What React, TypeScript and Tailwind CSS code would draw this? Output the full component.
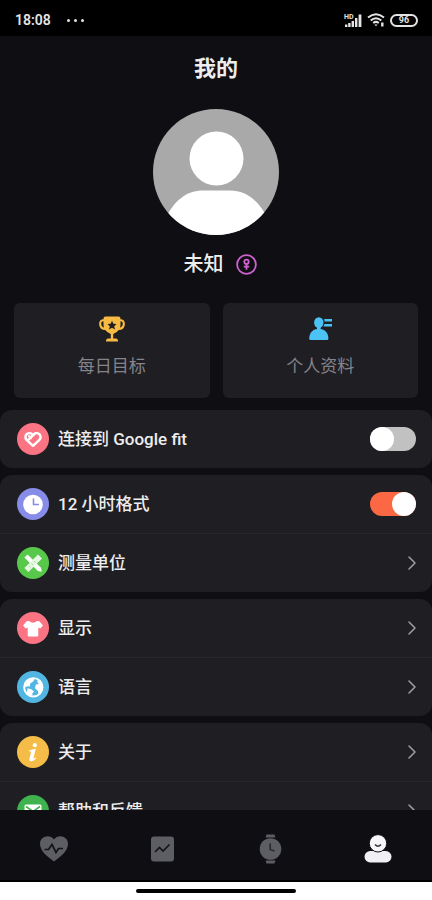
import React, { useState } from "react";
import { ChevronRight } from "lucide-react";

interface SettingItem {
  id: string;
  label: string;
  color: string;
  icon: React.ReactNode;
  toggle?: boolean;
  defaultOn?: boolean;
}

const HeartIcon = () => (
  <svg viewBox="0 0 32 32" className="w-8 h-8" fill="none" stroke="#fff" strokeWidth="2.5" strokeLinecap="round" strokeLinejoin="round">
    <path d="M16 22.8 L9.6 16.8 A3.9 3.9 0 0 1 14.8 11 L16 12.2 L17.2 11 A3.9 3.9 0 0 1 22.4 16.8 Z" />
    <path d="M17.2 11 L11.8 16.4" />
    <path d="M11.8 13 L14.2 15.2" strokeWidth="1.8" />
  </svg>
);

const ClockIcon = () => (
  <svg viewBox="0 0 32 32" className="w-8 h-8" fill="none">
    <circle cx="16" cy="16.5" r="9.8" fill="#fff" />
    <path d="M16.5 10.5 V16.5 H22" stroke="#878ce8" strokeWidth="1.6" />
  </svg>
);

const RulerIcon = () => (
  <svg viewBox="0 0 32 32" className="w-8 h-8" fill="none">
    <path d="M10.6 7.4 L24 20.8 L24.8 24.8 L20.8 24 L7.4 10.6 Z" fill="#fff" />
    <path d="M21 7.4 L25 11.4 L11.4 25 L7.4 21 Z" fill="#e6f7e3" />
    <path d="M12 19 L13.5 20.5 M14.5 16.5 L16 18 M17 14 L18.5 15.5" stroke="#8bd482" strokeWidth="0.8" />
  </svg>
);

const ShirtIcon = () => (
  <svg viewBox="0 0 32 32" className="w-8 h-8" fill="#fff">
    <path d="M12 9 Q16 12.4 20 9 L22.4 9.3 L26 13.6 L23.3 16.6 L21.3 15.4 V23.6 Q21.3 24.4 20.5 24.4 H11.5 Q10.7 24.4 10.7 23.6 V15.4 L8.7 16.6 L6 13.6 L9.6 9.3 Z" />
  </svg>
);

const GlobeIcon = () => (
  <svg viewBox="0 0 32 32" className="w-8 h-8" fill="none">
    <circle cx="16.3" cy="16.3" r="9.2" stroke="#fff" strokeWidth="1.9" />
    <path d="M8.2 12.5 Q10.5 7.8 16 7.2 L17.4 8.8 L15.8 10.8 L13.2 12.6 L12.8 15.6 L10.2 15.2 L7.4 17 Z" fill="#fff" />
    <path d="M10.6 17.2 L14.4 18.2 L17 20.4 L15.4 22.6 L15.2 25 Q11.6 24.4 9.6 22 Z" fill="#fff" />
    <path d="M21 8.6 Q25.2 11.4 25.3 16.2 Q25.2 20.4 21.6 23.2 L20.8 19.8 L18 17.2 L18.8 13.6 L22 13 L20.2 11 Z" fill="#fff" />
  </svg>
);

const InfoIcon = () => (
  <svg viewBox="0 0 32 32" className="w-8 h-8" fill="#fff">
    <circle cx="17.8" cy="9.2" r="2.1" />
    <path d="M12.4 14.2 Q15.4 13.7 18.8 12.8 L16.5 22 Q16.3 23.2 18.8 21.4 L19.2 22.2 Q16.8 25.3 14 25.2 Q11.9 25 12.5 22.4 L14.2 15.6 L12.3 15.4 Z" />
  </svg>
);

const MailIcon = () => (
  <svg viewBox="0 0 32 32" className="w-8 h-8" fill="none">
    <rect x="7.5" y="9.5" width="17" height="13.5" rx="1.5" fill="#fff" />
    <path d="M9 11.5 L16 16.5 L23 11.5" stroke="#3fb34d" strokeWidth="1.6" />
  </svg>
);

const groups: SettingItem[][] = [
  [{ id: "google-fit", label: "连接到 Google fit", color: "bg-[#fb7484]", icon: <HeartIcon />, toggle: true, defaultOn: false }],
  [
    { id: "hour-format", label: "12 小时格式", color: "bg-[#878ce8]", icon: <ClockIcon />, toggle: true, defaultOn: true },
    { id: "units", label: "测量单位", color: "bg-[#58c84b]", icon: <RulerIcon /> },
  ],
  [
    { id: "display", label: "显示", color: "bg-[#fb7484]", icon: <ShirtIcon /> },
    { id: "language", label: "语言", color: "bg-[#52b6e2]", icon: <GlobeIcon /> },
  ],
  [
    { id: "about", label: "关于", color: "bg-[#f5bd47]", icon: <InfoIcon /> },
    { id: "feedback", label: "帮助和反馈", color: "bg-[#3fb34d]", icon: <MailIcon /> },
  ],
];

const StatusBar = () => (
  <div className="flex h-9 shrink-0 items-center justify-between bg-black pt-1 pr-[14px] pl-[15px] text-[#e4e4e4]">
    <div className="flex items-center gap-4">
      <span className="text-sm font-semibold">18:08</span>
      <span className="flex gap-1">
        <i className="h-[3px] w-[3px] rounded-full bg-current" />
        <i className="h-[3px] w-[3px] rounded-full bg-current" />
        <i className="h-[3px] w-[3px] rounded-full bg-current" />
      </span>
    </div>
    <div className="flex items-center gap-[5px]">
      <svg viewBox="0 0 18 13" className="h-[13px] w-[18px]" fill="currentColor">
        <text x="0" y="5" fontSize="7" fontWeight="700">HD</text>
        <path d="M1 10.5h2.4V13H1z M4.2 9h2.4v4H4.2z M7.6 7h2.4v6H7.6z M11 4h2.4v9H11z M14.6 0.5h2.8V13h-2.8z" />
      </svg>
      <svg viewBox="0 0 18 14" className="h-[14px] w-[18px]" fill="none" stroke="currentColor" strokeWidth="2">
        <path d="M1 4.6 Q9 -2 17 4.6" />
        <path d="M3.7 7.6 Q9 3 14.3 7.6" />
        <path d="M6.2 10 Q9 7.8 11.8 10" />
        <path d="M7.4 11.5 L9 13.3 L10.6 11.5 Z" fill="currentColor" stroke="none" />
        <path d="M15.3 9.5 V13.5" strokeWidth="2.4" />
      </svg>
      <span className="flex h-[13px] w-7 items-center justify-center rounded-full border-2 border-current text-[9px] leading-none font-bold">
        96
      </span>
    </div>
  </div>
);

const Profile = () => (
  <section className="flex flex-col items-center">
    <svg viewBox="0 0 126 126" className="mt-[9px] h-[126px] w-[126px]" role="img" aria-label="头像">
      <clipPath id="avatar">
        <circle cx="63" cy="63" r="63" />
      </clipPath>
      <g clipPath="url(#avatar)">
        <rect width="126" height="126" fill="#a9a9a9" />
        <circle cx="63.5" cy="49.5" r="27" fill="#fff" />
        <path d="M11 112 C21 91 34 81.5 50 81.5 H77 C93 81.5 106 91 116 112 V130 H11 Z" fill="#fff" />
      </g>
    </svg>
    <div className="mt-3 flex h-[34px] items-center gap-3 pl-2">
      <span className="text-xl font-medium">未知</span>
      <svg viewBox="0 0 21 21" className="h-[21px] w-[21px]" fill="none" stroke="#cf62cf" strokeWidth="1.8">
        <circle cx="10.5" cy="10.5" r="9.4" />
        <circle cx="10.5" cy="7.8" r="2.2" />
        <path d="M10.5 10 V15.8 M7.8 12.6 H13.2" />
      </svg>
    </div>
  </section>
);

const TrophyIcon = () => (
  <svg viewBox="0 0 28 28" className="h-7 w-7" fill="none">
    <path d="M7 5.5 C3.5 4.5 1.8 6.5 2.2 9.5 C2.7 12.8 5.2 14.2 8.5 13.8 M21 5.5 C24.5 4.5 26.2 6.5 25.8 9.5 C25.3 12.8 22.8 14.2 19.5 13.8" stroke="#f7ba44" strokeWidth="2.2" />
    <path d="M7.5 1.5 H20.5 Q22.5 1.500 22.5 3.5 V10 Q22.5 16 15.2 19 V23.6 H18 Q20 23.6 20 26.4 H8 Q8 23.6 10 23.6 H12.8 V19 Q5.500 16 5.5 10 V3.5 Q5.5 1.500 7.5 1.5 Z" fill="#f7ba44" />
    <path d="M14 5.8 L15.4 8.8 L18.6 9.1 L16.2 11.2 L17 14.4 L14 12.7 L11 14.4 L11.8 11.2 L9.4 9.1 L12.6 8.8 Z" fill="#1f1e23" />
  </svg>
);

const PersonalIcon = () => (
  <svg viewBox="0 0 28 28" className="h-7 w-7" fill="#4cc3f5">
    <ellipse cx="12.8" cy="7.6" rx="4.7" ry="5.4" />
    <path d="M11 12 H14.6 V15 H11 Z" />
    <path d="M3.2 23.5 C3.4 17.600 7 13.8 12.8 13.8 C18.6 13.8 22.2 17.6 22.4 23.5 Q22.4 25 20.9 25 H4.7 Q3.2 25 3.2 23.5 Z" />
    <path d="M18.2 4 H26 V6.4 H18.6 Z M18.6 9 H26 V11.4 H17.4 Z" />
  </svg>
);

const SettingRow: React.FC<{ item: SettingItem }> = ({ item }) => {
  const [isOn, setIsOn] = useState(!!item.defaultOn);

  const content = (
    <>
      <span className={`h-8 w-8 shrink-0 rounded-full ${item.color}`}>{item.icon}</span>
      <span className="flex-1 pt-0.5 text-left text-[17px] font-medium">{item.label}</span>
    </>
  );

  if (item.toggle) {
    return (
      <label htmlFor={item.id} className="flex h-[58px] w-full items-center gap-[9px] pr-4 pl-[17px]">
        {content}
        <input
          id={item.id}
          type="checkbox"
          checked={isOn}
          onChange={() => setIsOn(!isOn)}
          className="flex h-6 w-[46px] appearance-none rounded-full bg-[#c1c1c1] before:h-6 before:w-6 before:rounded-full before:bg-white checked:justify-end checked:bg-[#fb6843]"
        />
      </label>
    );
  }

  return (
    <button className="flex h-[58px] w-full items-center gap-[9px] pr-2 pl-[17px]">
      {content}
      <ChevronRight className="h-6 w-6 text-[#a0a0a4]" strokeWidth={1.5} />
    </button>
  );
};

const BottomNav = () => (
  <nav className="grid h-[72px] shrink-0 grid-cols-4 border-b-2 border-black bg-[#0f0e13] pt-2">
    <button aria-label="健康" className="flex items-center justify-center">
      <svg viewBox="0 0 30 30" className="h-[30px] w-[30px]" fill="none">
        <path d="M15 27.5 C8 22.5 1 17 1 9.8 C1 2.5 10.5 -0.5 15 5.5 C19.5 -0.5 29 2.5 29 9.8 C29 17 22 22.5 15 27.5 Z" fill="#5d5e63" />
        <path d="M5.5 15.5 H9.5 L13 10.5 L17 18.5 L19.5 14.5 H24" stroke="#141318" strokeWidth="1.7" />
      </svg>
    </button>
    <button aria-label="统计" className="flex items-center justify-center">
      <svg viewBox="0 0 30 30" className="h-[30px] w-[30px]" fill="none">
        <rect x="4" y="2.500" width="23" height="25" rx="3" fill="#5d5e63" />
        <path d="M8 18 L12.5 13.5 L16 17 L22.5 10.5" stroke="#141318" strokeWidth="1.7" />
      </svg>
    </button>
    <button aria-label="设备" className="flex items-center justify-center">
      <svg viewBox="0 0 30 30" className="h-[30px] w-[30px]" fill="none">
        <path d="M11.5 0.5 H19.5 L20.5 3.4 H10.5 Z M10.5 26.6 H20.5 L19.5 29.5 H11.5 Z" fill="#5d5e63" />
        <circle cx="15.500" cy="15" r="10.8" fill="#5d5e63" />
        <path d="M15.2 9.5 V15.5 L19.5 17" stroke="#2a2a2e" strokeWidth="1.7" />
      </svg>
    </button>
    <button aria-label="我的" aria-current="page" className="flex items-center justify-center">
      <svg viewBox="0 0 30 30" className="h-[30px] w-[30px]" fill="none">
        <rect x="1.500" y="17" width="27" height="11.500" rx="5.700" fill="#f0f0f4" />
        <circle cx="15" cy="9.3" r="8.700" fill="#f7f7fa" stroke="#0f0e13" />
        <path d="M12 10.5 Q15 14 18 10.5" stroke="#36353b" strokeWidth="1.5" />
      </svg>
    </button>
  </nav>
);

const App: React.FC = () => {
  return (
    <div className="flex h-screen flex-col bg-[#0f0e13] font-[Roboto,'Noto_Sans_CJK_SC',sans-serif] text-[#ededee]">
      <StatusBar />
      <main className="min-h-0 flex-1 overflow-x-hidden overflow-y-auto [scrollbar-width:none]">
        <h1 className="flex h-16 items-center justify-center text-[22px] font-bold">我的</h1>
        <Profile />
        <div className="mt-[22px] grid grid-cols-2 gap-[13px] px-[14px]">
          <button className="flex h-[95px] flex-col items-center gap-[11px] rounded-md bg-[#1f1e23] pt-3 text-[17px] text-[#85848a]">
            <TrophyIcon />
            每日目标
          </button>
          <button className="flex h-[95px] flex-col items-center gap-[11px] rounded-md bg-[#1f1e23] pt-3 text-[17px] text-[#85848a]">
            <PersonalIcon />
            个人资料
          </button>
        </div>
        <div className="mt-3 flex flex-col gap-[7px]">
          {groups.map((items) => (
            <ul key={items[0].id} className="divide-y divide-[#28272c] rounded-xl bg-[#1f1e23]">
              {items.map((item) => (
                <li key={item.id}>
                  <SettingRow item={item} />
                </li>
              ))}
            </ul>
          ))}
        </div>
      </main>
      <BottomNav />
      {/* Gesture bar */}
      <div className="flex h-[18px] shrink-0 items-center justify-center bg-white">
        <div className="h-1 w-40 rounded-full bg-black" />
      </div>
    </div>
  );
};

export default App;
